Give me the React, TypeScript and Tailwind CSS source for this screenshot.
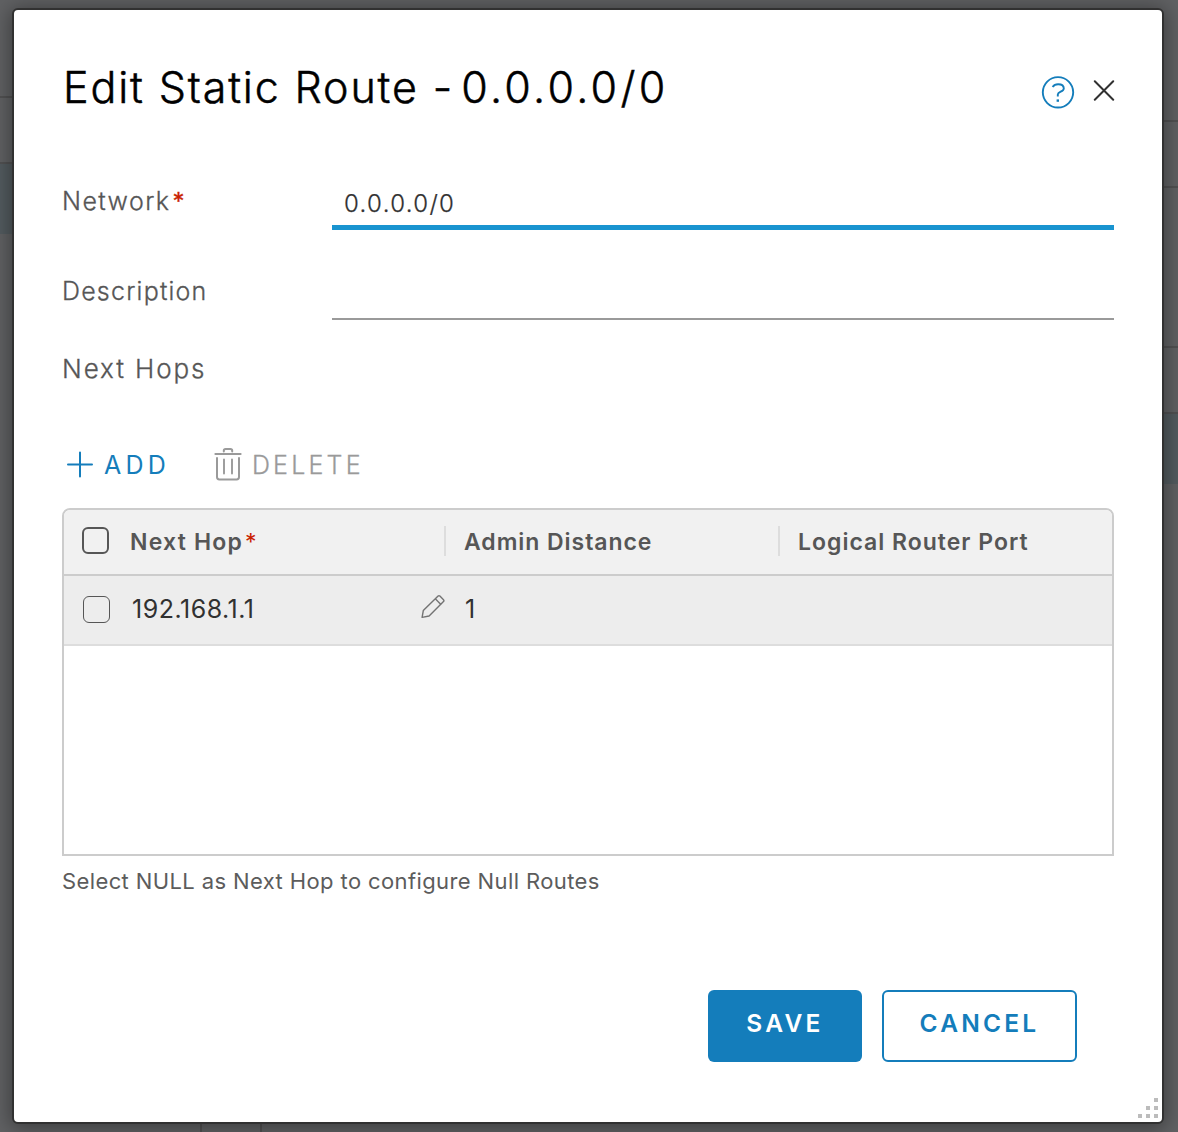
import type { ReactNode } from "react";

function HelpIcon() {
  return (
    <svg width="34" height="34" viewBox="0 0 34 34" fill="none" stroke="#147dbb" strokeWidth="1.9">
      <circle cx="17" cy="17.3" r="15.2" />
      <path d="M11.6 12C12.8 10.2 14.8 9.2 17.1 9.2C20.6 9.2 22.8 11 22.8 13.5C22.8 16.8 16.8 16.6 16.8 19.6V21.4" />
      <rect x="15.6" y="24.4" width="2.4" height="2.4" fill="#147dbb" stroke="none" />
    </svg>
  );
}

function CloseIcon() {
  return (
    <svg width="22" height="22" viewBox="0 0 22 22" stroke="#313131" strokeWidth="2" strokeLinecap="round">
      <path d="M1.8 1.3L20.2 19.7M20.2 1.3L1.8 19.7" />
    </svg>
  );
}

function PlusIcon() {
  return (
    <svg width="28" height="28" viewBox="0 0 28 28" stroke="#147dbb" strokeWidth="2" strokeLinecap="round">
      <path d="M14 2.4V26.4M2 14.6H26" />
    </svg>
  );
}

function TrashIcon() {
  return (
    <svg width="28" height="34" viewBox="0 0 28 34" fill="none" stroke="#9a9a9a" strokeWidth="2" strokeLinecap="round">
      <path d="M1.4 7H26.6" />
      <path d="M9.8 4.6V3.8C9.8 2.6 10.6 2 11.6 2H16.4C17.4 2 18.2 2.6 18.2 3.8V4.6" />
      <path d="M3 11V30C3 31.6 3.8 32.4 5.4 32.4H22.6C24.2 32.4 25 31.6 25 30V11" />
      <path d="M10 12.5V26.6M18 12.5V26.6" strokeWidth="1.9" />
    </svg>
  );
}

function PencilIcon() {
  return (
    <svg width="26" height="26" viewBox="0 0 26 26" fill="none" stroke="#737373" strokeWidth="1.4" strokeLinejoin="round">
      <path d="M3.3 16.6L18.1 2.1C18.7 1.5 19.3 1.5 19.9 2.1L23.5 5.7C24.1 6.3 24.1 7 23.5 7.6L9.1 22L2.1 23.4Z" />
      <path d="M15.3 4.8L20.9 10.4" />
    </svg>
  );
}

function ResizeGrip() {
  return (
    <svg width="22" height="22" viewBox="0 0 22 22" fill="#bcbcbc">
      <rect x="17" y="1" width="4" height="4" />
      <rect x="9" y="9" width="4" height="4" />
      <rect x="17" y="9" width="4" height="4" />
      <rect x="1" y="17" width="4" height="4" />
      <rect x="9" y="17" width="4" height="4" />
      <rect x="17" y="17" width="4" height="4" />
    </svg>
  );
}

function Label({ children }: { children: ReactNode }) {
  return (
    <label className="w-[270px] shrink-0 text-[25px] font-light leading-8 text-[#565656] [-webkit-text-stroke:0.3px]">
      {children}
    </label>
  );
}

function HeaderCell({ children, className }: { children: ReactNode; className: string }) {
  return <div className={`flex items-center text-[23px] font-semibold leading-8 text-[#565656] ${className}`}>{children}</div>;
}

export default function App() {
  return (
    <div
      className="grid h-[1132px] w-[1178px] grid-cols-[12px_1152px_14px] grid-rows-[8px_1116px_8px] overflow-hidden bg-[#606163] text-black"
      style={{ fontFamily: 'Inter, "Liberation Sans", sans-serif' }}
    >
      <div className="col-span-3" />

      <div className="flex flex-col">
        <div className="mt-[88px] h-[2px] bg-[#515152]" />
        <div className="mt-16 h-[2px] bg-[#515152]" />
        <div className="h-[70px] bg-[#535b5f]" />
      </div>

      <div className="relative z-10 flex flex-col rounded-[6px] border-2 border-[#313131] bg-white shadow-[0_2px_20px_2px_rgba(0,0,0,0.38)]">
        <header className="flex h-[110px] items-start pl-[49px] pt-[53px]">
          <h1 className="whitespace-pre text-[43px] font-light leading-[48px] [-webkit-text-stroke:0.5px]">
            <span className="tracking-[1.85px]">Edit Static Route </span>
            <span className="tracking-[-1.5px]">- </span>
            <span className="tracking-[3.3px]">0.0.0.0/0</span>
          </h1>
          <div className="ml-auto mr-[47px] flex items-start gap-[18px]">
            <button className="mt-[12px]"><HelpIcon /></button>
            <button className="mt-[17px]"><CloseIcon /></button>
          </div>
        </header>

        <form className="flex flex-1 flex-col px-[48px]">
          <div className="mt-[65px] flex h-[45px]">
            <Label>
              <span className="tracking-[1.4px]">Network</span>
              <span className="ml-[2px] text-[24px] font-normal text-[#c92100]">*</span>
            </Label>
            <div className="flex-1 border-b-[5px] border-[#1994d0] pl-[12px] pt-[3px] text-[24px] font-light leading-8 tracking-[1.35px] text-[#313131] [-webkit-text-stroke:0.25px]">
              0.0.0.0/0
            </div>
          </div>
          <div className="mt-[45px] flex h-[45px]">
            <Label><span className="tracking-[1.2px]">Description</span></Label>
            <div className="flex-1 border-b-2 border-[#9a9a9a]" />
          </div>
          <div className="mt-[33px] flex h-8">
            <Label><span className="text-[26px] tracking-[1.9px]">Next Hops</span></Label>
          </div>

          <div className="mt-[64px] flex h-8 text-[25px] leading-8">
            <button type="button" className="flex items-start text-[#147dbb]">
              <span className="ml-[4px] mt-[1px]"><PlusIcon /></span>
              <span className="ml-[10px] tracking-[4.2px]">ADD</span>
            </button>
            <button type="button" className="ml-[44px] flex items-start text-[#9a9a9a]">
              <span className="-mt-[2px]"><TrashIcon /></span>
              <span className="ml-[10px] font-light tracking-[3.2px] [-webkit-text-stroke:0.3px]">DELETE</span>
            </button>
          </div>

          <section className="mt-[27px] flex h-[348px] flex-col rounded-t-[8px] border-2 border-[#cccccc]">
            <div className="flex h-[66px] items-center rounded-t-[6px] border-b-2 border-[#cccccc] bg-[#f1f1f1]">
              <span className="mb-[3px] ml-[18px] h-[27px] w-[27px] rounded-[6px] border-2 border-[#565656]" />
              <HeaderCell className="ml-[21px] w-[314px]">
                <span className="tracking-[1.2px]">Next Hop</span>
                <span className="ml-[2px] font-normal text-[#c92100]">*</span>
              </HeaderCell>
              <span className="mb-[2px] h-[30px] w-[2px] bg-[#dddddd]" />
              <HeaderCell className="w-[332px] pl-[18px] tracking-[0.95px]">Admin Distance</HeaderCell>
              <span className="mb-[2px] h-[30px] w-[2px] bg-[#dddddd]" />
              <HeaderCell className="pl-[18px] tracking-[1px]">Logical Router Port</HeaderCell>
            </div>
            <div className="flex h-[70px] items-center border-b-2 border-[#dddddd] bg-[#ededed] text-[25px] leading-8 text-[#313131]">
              <span className="mb-[1px] ml-[19px] size-[27px] rounded-[6px] border-[1.5px] border-[#565656]" />
              <span className="mb-[2px] ml-[22px] w-[288px] tracking-[0.5px]">192.168.1.1</span>
              <span className="mb-[6px]"><PencilIcon /></span>
              <span className="mb-[2px] ml-[19px]">1</span>
            </div>
          </section>

          <p className="mt-[10px] text-[22px] leading-[30px] tracking-[0.39px] text-[#5c5c5c]">
            Select NULL as Next Hop to configure Null Routes
          </p>

          <footer className="mt-[94px] flex h-[72px] justify-end gap-5 pr-[37px] text-[24.5px] font-semibold">
            <button type="button" className="w-[154px] rounded-[6px] bg-[#147dbb] pb-[5px] tracking-[3.3px] text-white">SAVE</button>
            <button type="button" className="w-[195px] rounded-[6px] border-2 border-[#147dbb] pb-[5px] tracking-[3.2px] text-[#147dbb]">CANCEL</button>
          </footer>
        </form>
        <div className="flex h-[25px] justify-end pr-[3px]"><ResizeGrip /></div>
      </div>

      <div className="flex flex-col">
        <div className="mt-[112px] h-[2px] bg-[#515152]" />
        <div className="mt-16 h-[2px] bg-[#515152]" />
        <div className="mt-[158px] h-[2px] bg-[#515152]" />
        <div className="mt-16 h-[2px] bg-[#515152]" />
        <div className="h-[70px] bg-[#535b5f]" />
      </div>

      <div className="col-span-3 flex">
        <div className="ml-[200px] w-[2px] bg-[#515152]" />
        <div className="ml-[58px] w-[2px] bg-[#515152]" />
      </div>
    </div>
  );
}
